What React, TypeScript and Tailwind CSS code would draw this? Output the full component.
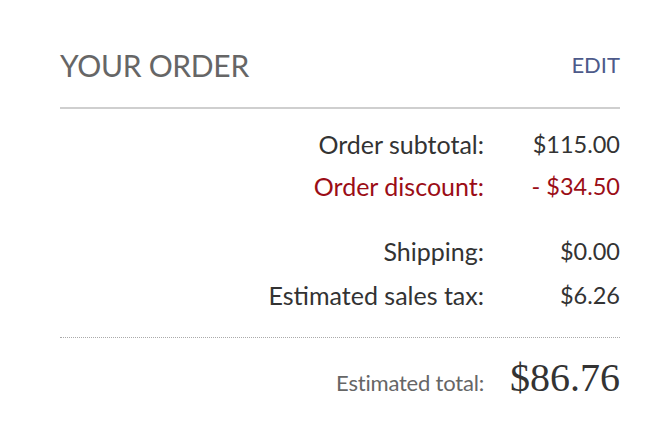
const rows = [
  { label: "Order subtotal:", value: "$115.00" },
  { label: "Order discount:", value: "- $34.50", discount: true },
];

const rows2 = [
  { label: "Shipping:", value: "$0.00" },
  { label: "Estimated sales tax:", value: "$6.26" },
];

function Row({ label, value, discount }: { label: string; value: string; discount?: boolean }) {
  const color = discount ? "text-[#9b0d16]" : "text-[#333]";
  return (
    <>
      <div className={`text-right text-[25px] ${color}`}>{label}</div>
      <div className={`text-right text-[23.5px] ${color}`}>{value}</div>
    </>
  );
}

export default function App() {
  return (
    <div className="w-[652px] h-[430px] bg-white pl-[60px] pr-[32px] pt-[47px] font-['Lato',sans-serif]">
      <div className="flex items-center justify-between h-[36px]">
        <h2 className="text-[30px] leading-none text-[#666] tracking-[-0.3px]">YOUR ORDER</h2>
        <a href="#" className="text-[22px] leading-none text-[#4d5a8a]">EDIT</a>
      </div>
      <div className="mt-[24px] border-t-2 border-[#cfcfcf]" />

      <div className="grid grid-cols-[1fr_120px] gap-x-4 mt-[14px] leading-[42px]">
        {rows.map((r) => (
          <Row key={r.label} {...r} />
        ))}
      </div>
      <div className="grid grid-cols-[1fr_120px] gap-x-4 mt-[22px] leading-[44px]">
        {rows2.map((r) => (
          <Row key={r.label} {...r} />
        ))}
      </div>

      <div className="mt-[20px] border-t border-dotted border-[#aaa]" />
      <div className="grid grid-cols-[1fr_120px] gap-x-4 items-baseline mt-[20px]">
        <div className="text-right text-[22px] text-[#666] tracking-[-0.2px]">Estimated total:</div>
        <div className="text-right text-[40px] leading-none text-[#333] font-['Liberation_Serif',serif]">
          $86.76
        </div>
      </div>
    </div>
  );
}
